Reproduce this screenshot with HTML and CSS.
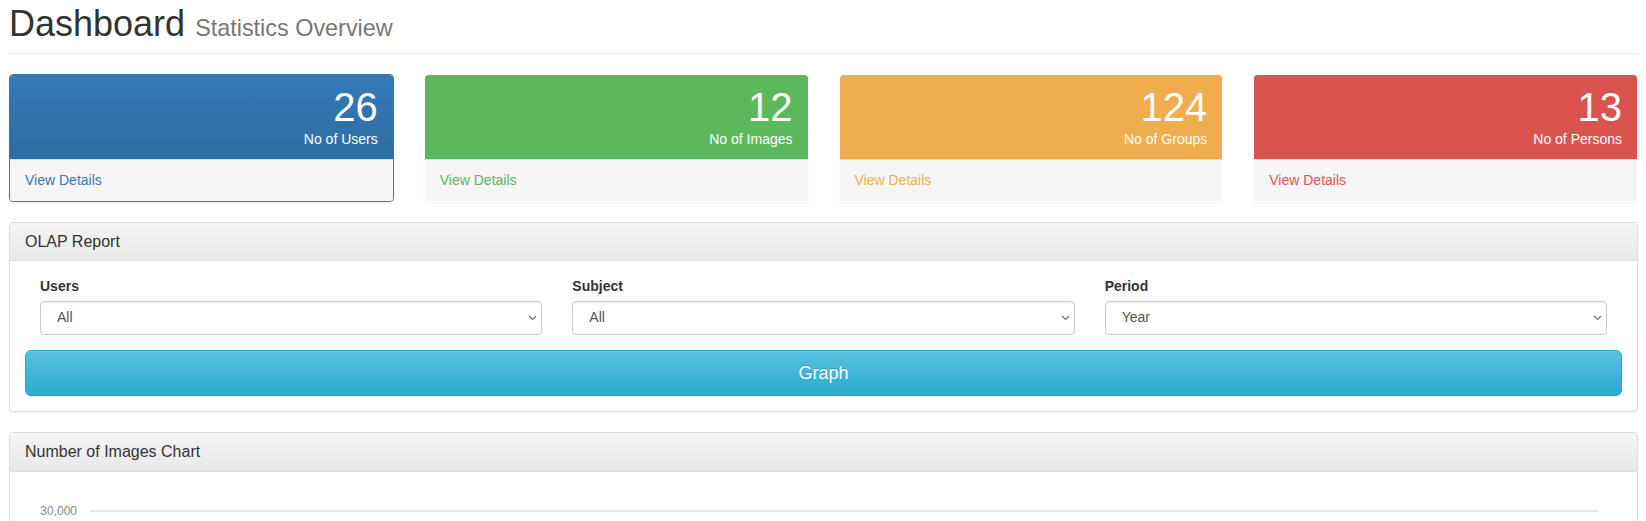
FILE: index.html
```html
<!DOCTYPE html>
<html lang="en">
<head>
<meta charset="utf-8">
<title>Dashboard</title>
<link rel="stylesheet" href="styles.css">
</head>
<body>
<div class="page">
  <h1 class="page-header">Dashboard <small>Statistics Overview</small></h1>

  <div class="stats">
    <div class="stat stat-blue">
      <div class="stat-head">
        <div class="huge">26</div>
        <div class="stat-label">No of Users</div>
      </div>
      <a class="stat-foot" href="#">View Details</a>
    </div>
    <div class="stat stat-green">
      <div class="stat-head">
        <div class="huge">12</div>
        <div class="stat-label">No of Images</div>
      </div>
      <a class="stat-foot" href="#">View Details</a>
    </div>
    <div class="stat stat-orange">
      <div class="stat-head">
        <div class="huge">124</div>
        <div class="stat-label">No of Groups</div>
      </div>
      <a class="stat-foot" href="#">View Details</a>
    </div>
    <div class="stat stat-red">
      <div class="stat-head">
        <div class="huge">13</div>
        <div class="stat-label">No of Persons</div>
      </div>
      <a class="stat-foot" href="#">View Details</a>
    </div>
  </div>

  <div class="panel">
    <div class="panel-heading"><h3 class="panel-title">OLAP Report</h3></div>
    <div class="panel-body">
      <form class="olap">
        <div class="fields">
          <div class="field">
            <label class="field-label">Users</label>
            <div class="select-wrap">
              <select class="form-control"><option>All</option></select>
              <svg class="chevron" width="9" height="6" viewBox="0 0 9 6"><path d="M1 1 L4.5 4.5 L8 1" fill="none" stroke="#6f6f6f" stroke-width="1.2"/></svg>
            </div>
          </div>
          <div class="field">
            <label class="field-label">Subject</label>
            <div class="select-wrap">
              <select class="form-control"><option>All</option></select>
              <svg class="chevron" width="9" height="6" viewBox="0 0 9 6"><path d="M1 1 L4.5 4.5 L8 1" fill="none" stroke="#6f6f6f" stroke-width="1.2"/></svg>
            </div>
          </div>
          <div class="field">
            <label class="field-label">Period</label>
            <div class="select-wrap">
              <select class="form-control"><option>Year</option><option>Month</option></select>
              <svg class="chevron" width="9" height="6" viewBox="0 0 9 6"><path d="M1 1 L4.5 4.5 L8 1" fill="none" stroke="#6f6f6f" stroke-width="1.2"/></svg>
            </div>
          </div>
        </div>
        <button type="button" class="btn-graph">Graph</button>
      </form>
    </div>
  </div>

  <div class="panel">
    <div class="panel-heading"><h3 class="panel-title">Number of Images Chart</h3></div>
    <div class="panel-body">
      <div class="chart">
        <div class="grid-row"><span class="axis-label">30,000</span><span class="grid-line"></span></div>
      </div>
    </div>
  </div>
</div>
</body>
</html>
```

FILE: styles.css
```css
html {
  overflow: hidden;
}

body {
  margin: 0;
  font-family: "Liberation Sans", Arial, Helvetica, sans-serif;
  font-size: 14px;
  line-height: 1.42857;
  color: #333;
  background: #fff;
}

.page {
  padding: 4px 8px 0 9px;
}

.page-header {
  margin: 0 0 20px;
  padding-bottom: 9px;
  border-bottom: 1px solid #eee;
  font-size: 36px;
  font-weight: normal;
  line-height: 1.1;
  color: #333;
}

.page-header small {
  font-size: 65%;
  font-weight: normal;
  color: #777;
}

/* stat cards */
.stats {
  display: grid;
  grid-template-columns: repeat(4, 1fr);
  column-gap: 30px;
  margin-bottom: 20px;
}

.stat {
  display: flex;
  flex-direction: column;
  border: 1px solid transparent;
  border-radius: 4px;
  background: #fff;
  box-shadow: 0 1px 2px rgba(0, 0, 0, 0.06);
  overflow: hidden;
}

.stat-head {
  padding: 10px 15px;
  text-align: right;
  color: #fff;
  border-radius: 3px 3px 0 0;
}

.huge {
  font-size: 40px;
  line-height: 1.1;
}

.stat-label {
  line-height: 20px;
}

.stat-foot {
  display: block;
  padding: 10px 15px 11px;
  line-height: 20px;
  background: #f5f5f5;
  border-top: 1px solid #ddd;
  text-decoration: none;
}

.stat-blue {
  border-color: #337ab7;
}
.stat-blue .stat-head {
  background: linear-gradient(to bottom, #337ab7 0, #2e6da4 100%);
}
.stat-blue .stat-foot {
  color: #337ab7;
}

.stat-green .stat-head {
  background: #5cb85c;
}
.stat-green .stat-foot {
  color: #5cb85c;
}

.stat-orange .stat-head {
  background: #f0ad4e;
}
.stat-orange .stat-foot {
  color: #f0ad4e;
}

.stat-red .stat-head {
  background: #d9534f;
}
.stat-red .stat-foot {
  color: #d9534f;
}

/* panels */
.panel {
  margin-bottom: 20px;
  background: #fff;
  border: 1px solid #ddd;
  border-radius: 4px;
  box-shadow: 0 1px 2px rgba(0, 0, 0, 0.05);
}

.panel-heading {
  padding: 10px 15px;
  border-bottom: 1px solid #ddd;
  border-radius: 3px 3px 0 0;
  background: linear-gradient(to bottom, #f5f5f5 0, #e8e8e8 100%);
  color: #333;
}

.panel-title {
  margin: 0;
  font-size: 16px;
  font-weight: normal;
  line-height: 1.1;
}

.panel-body {
  padding: 15px;
}

.olap {
  margin: 0;
}

.fields {
  display: grid;
  grid-template-columns: repeat(3, 1fr);
  column-gap: 30px;
  padding: 0 15px;
  margin-bottom: 15px;
}

.field {
  display: flex;
  flex-direction: column;
  align-items: stretch;
  min-width: 0;
}

.field-label {
  align-self: flex-start;
  display: inline-block;
  margin-bottom: 5px;
  font-weight: bold;
  line-height: 20px;
}

.select-wrap {
  position: relative;
}

.form-control {
  display: block;
  width: 100%;
  height: 34px;
  padding: 6px 24px 6px 16px;
  font-family: inherit;
  font-size: 14px;
  line-height: 1.42857;
  color: #555;
  background-color: #fff;
  border: 1px solid #ccc;
  border-radius: 4px;
  box-shadow: inset 0 1px 1px rgba(0, 0, 0, 0.075);
  box-sizing: border-box;
  -webkit-appearance: none;
  appearance: none;
}

.chevron {
  position: absolute;
  right: 5px;
  top: 14px;
  pointer-events: none;
}

.btn-graph {
  display: block;
  width: 100%;
  padding: 10px 16px;
  font-family: inherit;
  font-size: 18px;
  line-height: 1.3333333;
  color: #fff;
  text-shadow: 0 -1px 0 rgba(0, 0, 0, 0.2);
  background: linear-gradient(to bottom, #5bc0de 0, #2aabd2 100%);
  border: 1px solid #28a4c9;
  border-radius: 6px;
  box-shadow: inset 0 1px 0 rgba(255, 255, 255, 0.15), 0 1px 1px rgba(0, 0, 0, 0.075);
  box-sizing: border-box;
  cursor: pointer;
}

/* chart */
.chart {
  display: flex;
  flex-direction: column;
  padding: 15px 24px 240px 0;
}

.grid-row {
  display: flex;
  align-items: center;
  gap: 12px;
  height: 18px;
}

.axis-label {
  width: 52px;
  text-align: right;
  font-size: 12px;
  line-height: 18px;
  color: #888;
}

.grid-line {
  flex: 1;
  height: 2px;
  background: #e6e6e6;
}
```
